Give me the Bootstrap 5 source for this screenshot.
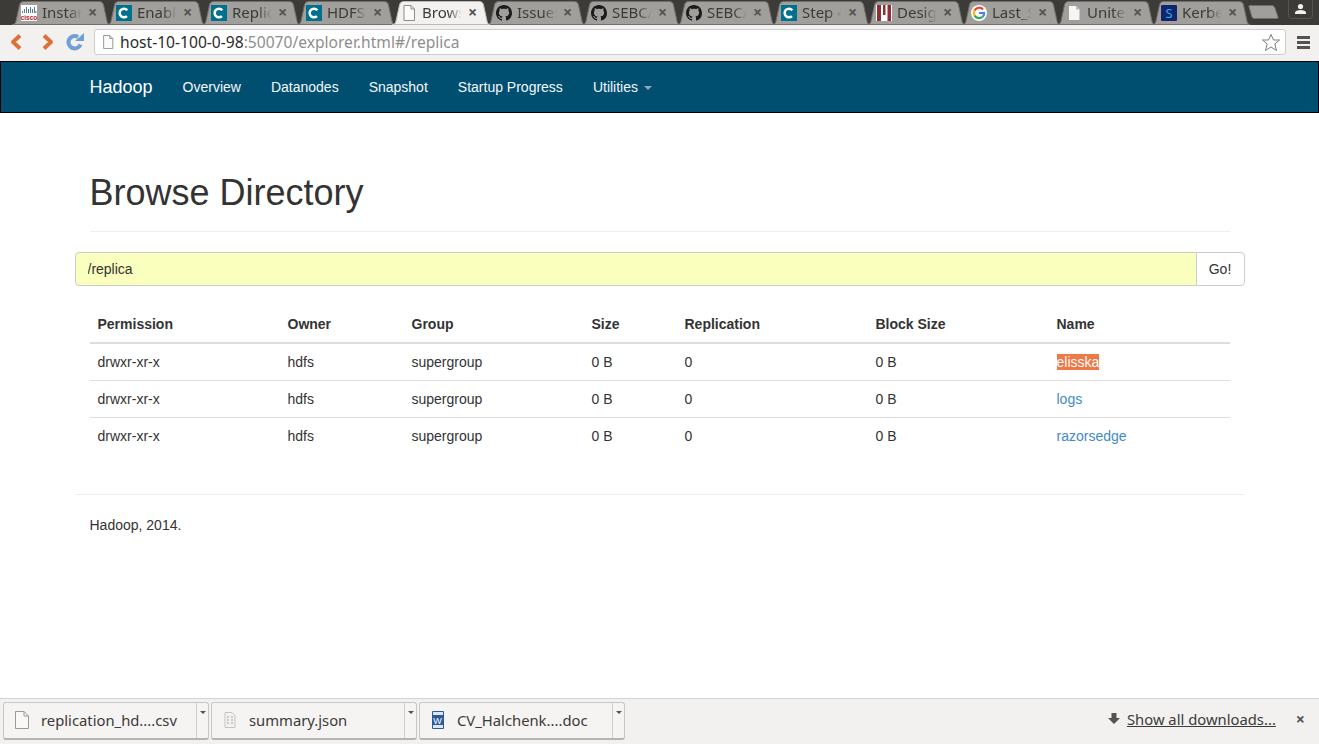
<!DOCTYPE html>
<html lang="en">
<head>
    <meta charset="UTF-8">
    <title>Browsing HDFS</title>
    <link href="https://cdn.jsdelivr.net/npm/bootstrap@5.3.0/dist/css/bootstrap.min.css" rel="stylesheet">
    <style>
        html, body { height: 100%; }
        body {
            font-family: "Liberation Sans", Arial, sans-serif;
            font-size: 14px;
            line-height: 20px;
            color: #333;
            overflow: hidden;
        }
        /* browser chrome */
        .tab-strip {
            height: 25px;
            background: #3c3b37;
            padding-left: 12px;
            font-family: "Noto Sans", sans-serif;
        }
        .tab-item {
            width: 98px;
            height: 24px;
            margin-right: -3px;
            margin-top: 1px;
            position: relative;
            flex: none;
            color: #3c3b37;
        }
        .tab-shape { position: absolute; left: 0; top: 0; width: 98px; height: 24px; fill: #a09f9c; stroke: #6f6e6a; }
        .tab-on { z-index: 2; }
        .tab-on .tab-shape { fill: #f2f1f0; stroke: #bbb; }
        .tab-fav { position: absolute; left: 9px; top: 4px; width: 16px; height: 16px; }
        .tab-title {
            position: absolute; left: 30px; top: 0; width: 40px;
            font-size: 15px; line-height: 22px; white-space: nowrap; overflow: hidden;
            -webkit-mask-image: linear-gradient(to right, #000 65%, transparent);
            mask-image: linear-gradient(to right, #000 65%, transparent);
        }
        .tab-x { position: absolute; left: 75px; top: 0; width: 11px; font-size: 16px; font-weight: 700; line-height: 22px; text-align: center; color: #55534f; }
        .new-tab { width: 32px; height: 14px; margin: 5px 0 0 1px; flex: none; fill: #a09f9c; stroke: #6f6e6a; }
        .profile-btn {
            width: 25px; height: 19px; flex: none; margin-left: auto; margin-right: 6px;
            border: 1px solid #55534f; border-top: 0; border-radius: 0 0 4px 4px;
            background: #3c3b37;
        }
        .tool-bar {
            height: 36px;
            background: #f2f1f0;
            padding-left: 8px;
            padding-bottom: 2px;
            font-family: "Noto Sans", sans-serif;
        }
        .tool-ico { width: 16px; height: 18px; flex: none; }
        .reload-ico { width: 18px; margin-left: 10px; }
        .url-box {
            width: 1192px; height: 26px; margin-left: 10px; flex: none;
            background: #fff; border: 1px solid #ccc; border-radius: 3px;
            padding-left: 6px;
            font-size: 15.6px; white-space: nowrap;
        }
        .url-host { color: #2b2b2b; margin-left: 5px; }
        .url-rest { color: #8e8e8e; }
        .menu-bars { width: 13px; margin-left: 11px; flex: none; }
        .menu-bars i { display: block; height: 3px; background: #55534f; margin: 2px 0; }

        /* hadoop page */
        .hadoop-nav {
            height: 52px;
            background: #004f70;
            border: 1px solid #000;
            padding: 0;
        }
        .page-wrap { width: 1170px; margin: 0 auto; padding: 0 15px; }
        .hadoop-nav .navbar-brand { font-size: 18px; line-height: 20px; color: #fff; padding: 15px; margin: 0 0 0 -15px; }
        .hadoop-nav.navbar-expand .navbar-nav .nav-link { color: #f4f7f9; padding: 15px; line-height: 20px; }
        .hadoop-nav .dropdown-toggle::after { color: #8fa9b8; margin-left: 6px; vertical-align: 2px; border-top-width: 4px; border-left-width: 4px; border-right-width: 4px; }
        .head-block { margin-top: 60px; padding-bottom: 8px; border-bottom: 1px solid #eee; margin-bottom: 20px; }
        .head-block h1 { font-size: 36px; line-height: 40px; font-weight: 500; margin: 0 0 10px; color: #333; }
        .path-group { margin: 0 -15px; width: 1170px; }
        .path-group .form-control {
            height: 34px; font-size: 14px; line-height: 20px; padding: 6px 12px;
            background: #faffbd; color: #333; border-color: #ccc; border-radius: 4px 0 0 4px;
        }
        .path-group .btn { width: 49px; height: 34px; padding: 6px 0; font-size: 14px; line-height: 20px; background: #fff; border-color: #ccc; color: #333; border-radius: 0 4px 4px 0; }
        .dir-table { width: 1140px; margin: 19px 0 40px; table-layout: fixed; color: #333; }
        .dir-table th, .dir-table td { padding: 8px; line-height: 20px; border-bottom: 1px solid #ddd; border-top: 0; font-size: 14px; }
        .dir-table thead th { border-bottom: 2px solid #ddd; height: 38px; }
        .dir-table tbody tr:last-child td { border-bottom: 0; }
        .dir-table a { color: #428bca; text-decoration: none; }
        .dir-table .w-a { width: 190px; }
        .dir-table .w-b { width: 124px; }
        .dir-table .w-c { width: 180px; }
        .dir-table .w-d { width: 93px; }
        .dir-table .w-e { width: 191px; }
        .dir-table .w-f { width: 181px; }
        .dir-table .w-g { width: 181px; }
        .picked { background: #f07746; color: #fff; display: inline-block; line-height: 16px; }
        .foot-rule { margin: 0 -15px 20px; border: 0; border-top: 1px solid #eee; opacity: 1; width: 1170px; }

        /* download shelf */
        .shelf {
            margin-top: auto;
            height: 46px;
            background: #f2f1f0;
            border-top: 1px solid #d4d3d1;
            padding: 3px 0 0 3px;
            font-family: "Noto Sans", sans-serif;
            font-size: 14.8px;
            color: #3c3b37;
        }
        .dl-item {
            width: 206px; height: 38px; margin-right: 2px; flex: none;
            background: #f5f4f3; border: 1px solid #c8c7c5; border-bottom: 2px solid #b5b4b2; border-radius: 3px;
        }
        .dl-main { width: 192px; padding: 0 0 2px 10px; gap: 11px; }
        .dl-main svg { width: 16px; height: 20px; flex: none; }
        .dl-drop { width: 12px; border-left: 1px solid #d0cfcd; padding-top: 8px; }
        .dl-drop i { display: block; margin: 0 auto; width: 0; height: 0; border-left: 3px solid transparent; border-right: 3px solid transparent; border-top: 3px solid #55534f; }
        .show-all { color: #3c3b37; text-decoration: underline; }
        .shelf-arrow { margin-right: 7px; }
        .shelf-x { margin: 0 14px 0 20px; color: #55534f; font-size: 16px; font-weight: 700; }
        .shelf-tools { margin-left: auto; height: 34px; }
    </style>
</head>
<body class="d-flex flex-column">
    <svg width="0" height="0" class="position-absolute">
        <symbol id="tabshape" viewBox="0 0 98 24"><path d="M0 23.5C3 23.500 3.500 22 4 20L7.500 4C8 1.500 9.500 .5 12 .5H87C89.500 .5 91 1.500 91.500 4L95 20C95.500 22 96 23.500 98 23.500Z"/></symbol>
        <symbol id="conf" viewBox="0 0 16 16"><rect width="16" height="16" fill="#00708f"/><circle cx="8" cy="8" r="4.3" fill="none" stroke="#fff" stroke-width="2.6" stroke-dasharray="20 7" stroke-dashoffset="-3.4"/></symbol>
        <symbol id="gh" viewBox="0 0 16 16"><path fill="#1b1b1b" d="M8 0C3.58 0 0 3.58 0 8c0 3.54 2.29 6.53 5.47 7.59.4.07.55-.17.55-.38 0-.19-.01-.82-.01-1.49-2.01.37-2.53-.49-2.69-.94-.09-.23-.48-.94-.82-1.13-.28-.15-.68-.52-.01-.53.63-.01 1.08.58 1.23.82.72 1.21 1.87.87 2.33.66.07-.52.28-.87.51-1.07-1.78-.2-3.64-.89-3.64-3.95 0-.87.31-1.59.82-2.15-.08-.2-.36-1.02.08-2.12 0 0 .67-.21 2.2.82.64-.18 1.32-.27 2-.27s1.36.09 2 .27c1.53-1.04 2.2-.82 2.2-.82.44 1.1.16 1.92.08 2.12.51.56.82 1.27.82 2.15 0 3.07-1.87 3.75-3.65 3.95.29.25.54.73.54 1.48 0 1.07-.01 1.93-.01 2.2 0 .21.15.46.55.38A8.01 8.01 0 0 0 16 8c0-4.42-3.58-8-8-8z"/></symbol>
        <symbol id="page" viewBox="0 0 16 16"><path fill="#fbfbfb" stroke="#8c8c8c" d="M3 .5H10L13.5 4V15.5H3Z"/><path fill="none" stroke="#8c8c8c" d="M10 .5V4H13.5"/></symbol>
    </svg>

    <div class="tab-strip d-flex flex-shrink-0">
        <div class="tab-item">
            <svg class="tab-shape"><use href="#tabshape"/></svg>
            <svg class="tab-fav" viewBox="0 0 16 16">
                <rect width="16" height="16" fill="#fff"/>
                <path stroke="#3f6f8f" stroke-width=".9" d="M1.500 6V8M3.500 4V8M5.500 2V8M7.500 4V8M9.500 2V8M11.500 4V8M13.500 2V8M14.800 6V8"/>
                <text x="8" y="14.500" text-anchor="middle" font-size="6.500" font-weight="700" fill="#b01c2e" font-family="Liberation Sans">cisco</text>
            </svg>
            <span class="tab-title">Instar</span><span class="tab-x">×</span>
        </div>
        <div class="tab-item"><svg class="tab-shape"><use href="#tabshape"/></svg><svg class="tab-fav"><use href="#conf"/></svg><span class="tab-title">Enabl</span><span class="tab-x">×</span></div>
        <div class="tab-item"><svg class="tab-shape"><use href="#tabshape"/></svg><svg class="tab-fav"><use href="#conf"/></svg><span class="tab-title">Replic</span><span class="tab-x">×</span></div>
        <div class="tab-item"><svg class="tab-shape"><use href="#tabshape"/></svg><svg class="tab-fav"><use href="#conf"/></svg><span class="tab-title">HDFS</span><span class="tab-x">×</span></div>
        <div class="tab-item tab-on"><svg class="tab-shape"><use href="#tabshape"/></svg><svg class="tab-fav"><use href="#page"/></svg><span class="tab-title">Brows</span><span class="tab-x">×</span></div>
        <div class="tab-item"><svg class="tab-shape"><use href="#tabshape"/></svg><svg class="tab-fav"><use href="#gh"/></svg><span class="tab-title">Issues</span><span class="tab-x">×</span></div>
        <div class="tab-item"><svg class="tab-shape"><use href="#tabshape"/></svg><svg class="tab-fav"><use href="#gh"/></svg><span class="tab-title">SEBC/</span><span class="tab-x">×</span></div>
        <div class="tab-item"><svg class="tab-shape"><use href="#tabshape"/></svg><svg class="tab-fav"><use href="#gh"/></svg><span class="tab-title">SEBC/</span><span class="tab-x">×</span></div>
        <div class="tab-item"><svg class="tab-shape"><use href="#tabshape"/></svg><svg class="tab-fav"><use href="#conf"/></svg><span class="tab-title">Step 4</span><span class="tab-x">×</span></div>
        <div class="tab-item">
            <svg class="tab-shape"><use href="#tabshape"/></svg>
            <svg class="tab-fav" viewBox="0 0 16 16"><rect width="16" height="16" fill="#fff"/><path fill="#8f2f33" d="M1 0H5V16H1ZM7 0H9.500V10H7ZM11.500 0H15V16H11.500Z"/></svg>
            <span class="tab-title">Desig</span><span class="tab-x">×</span>
        </div>
        <div class="tab-item">
            <svg class="tab-shape"><use href="#tabshape"/></svg>
            <svg class="tab-fav" viewBox="0 0 16 16">
                <circle cx="8" cy="8" r="8" fill="#fff"/>
                <g fill="none" stroke-width="2.200">
                    <path stroke="#ea4335" d="M12 4.400A5.200 5.200 0 0 0 3.600 5.400"/>
                    <path stroke="#fbbc05" d="M3.600 5.400A5.200 5.200 0 0 0 3.600 10.600"/>
                    <path stroke="#34a853" d="M3.600 10.600A5.200 5.200 0 0 0 11.600 11.800"/>
                    <path stroke="#4285f4" d="M11.600 11.800A5.200 5.200 0 0 0 13.200 8H8"/>
                </g>
            </svg>
            <span class="tab-title">Last_S</span><span class="tab-x">×</span>
        </div>
        <div class="tab-item">
            <svg class="tab-shape"><use href="#tabshape"/></svg>
            <svg class="tab-fav" viewBox="0 0 16 16"><path fill="#f5f5f5" d="M3 1H10L13.500 4.500V15H3Z"/><path fill="#bbb" d="M10 1V4.500H13.500Z"/></svg>
            <span class="tab-title">United</span><span class="tab-x">×</span>
        </div>
        <div class="tab-item">
            <svg class="tab-shape"><use href="#tabshape"/></svg>
            <svg class="tab-fav" viewBox="0 0 16 16"><rect width="16" height="16" rx="1" fill="#13246e"/><text x="8" y="13" text-anchor="middle" font-size="13" fill="#1fb6e8" font-family="Noto Sans">S</text></svg>
            <span class="tab-title">Kerbe</span><span class="tab-x">×</span>
        </div>
        <svg class="new-tab" viewBox="0 0 32 14"><path d="M2 .5H23C25 .5 26 1 27 3L30 12C30.500 13 30 13.500 29 13.500H7C5 13.500 4.500 13 4 12L1 2C.8 1 1 .5 2 .5Z"/></svg>
        <div class="profile-btn d-flex align-items-center justify-content-center">
            <svg width="13" height="12" viewBox="0 0 13 12"><circle cx="6.500" cy="3.500" r="2.600" fill="#f2f1f0"/><path fill="#f2f1f0" d="M1 11V9.500C1 8 3.500 7 6.500 7S12 8 12 9.500V11Z"/></svg>
        </div>
    </div>

    <div class="tool-bar d-flex align-items-center flex-shrink-0">
        <svg class="tool-ico" viewBox="0 0 16 18"><path fill="none" stroke="#e0703a" stroke-width="4" stroke-linejoin="round" d="M12 2.500L5 9L12 15.500"/></svg>
        <svg class="tool-ico ms-3" viewBox="0 0 16 18"><path fill="none" stroke="#e0703a" stroke-width="4" stroke-linejoin="round" d="M4 2.500L11 9L4 15.500"/></svg>
        <svg class="tool-ico reload-ico" viewBox="0 0 18 18"><path fill="none" stroke="#6f9fd4" stroke-width="4" d="M14.500 11.500A6.200 6.200 0 1 1 12 4"/><path fill="#6f9fd4" d="M9 8H18V0Z"/></svg>
        <div class="url-box d-flex align-items-center">
            <svg width="14" height="16" viewBox="0 0 16 16" class="flex-shrink-0"><use href="#page"/></svg>
            <span class="url-host">host-10-100-0-98</span><span class="url-rest">:50070/explorer.html#/replica</span>
            <svg class="ms-auto me-1" width="20" height="19" viewBox="0 0 20 19"><path fill="#fff" stroke="#7d7d7d" d="M10 1.500L12.500 7H18.500L13.800 11L15.500 17.500L10 14L4.500 17.500L6.200 11L1.500 7H7.500Z"/></svg>
        </div>
        <div class="menu-bars"><i></i><i></i><i></i></div>
    </div>

    <nav class="navbar navbar-expand hadoop-nav flex-shrink-0">
        <div class="page-wrap d-flex">
            <a class="navbar-brand" href="#">Hadoop</a>
            <ul class="navbar-nav">
                <li class="nav-item"><a class="nav-link" href="#">Overview</a></li>
                <li class="nav-item"><a class="nav-link" href="#">Datanodes</a></li>
                <li class="nav-item"><a class="nav-link" href="#">Snapshot</a></li>
                <li class="nav-item"><a class="nav-link" href="#">Startup Progress</a></li>
                <li class="nav-item dropdown"><a class="nav-link dropdown-toggle" href="#">Utilities</a></li>
            </ul>
        </div>
    </nav>

    <div class="page-wrap">
        <div class="head-block"><h1>Browse Directory</h1></div>
        <div class="input-group path-group">
            <input class="form-control" type="text" value="/replica">
            <button class="btn" type="button">Go!</button>
        </div>
        <table class="table dir-table">
            <thead>
                <tr>
                    <th class="w-a">Permission</th><th class="w-b">Owner</th><th class="w-c">Group</th><th class="w-d">Size</th><th class="w-e">Replication</th><th class="w-f">Block Size</th><th class="w-g">Name</th>
                </tr>
            </thead>
            <tbody>
                <tr><td>drwxr-xr-x</td><td>hdfs</td><td>supergroup</td><td>0 B</td><td>0</td><td>0 B</td><td><span class="picked">elisska</span></td></tr>
                <tr><td>drwxr-xr-x</td><td>hdfs</td><td>supergroup</td><td>0 B</td><td>0</td><td>0 B</td><td><a href="#">logs</a></td></tr>
                <tr><td>drwxr-xr-x</td><td>hdfs</td><td>supergroup</td><td>0 B</td><td>0</td><td>0 B</td><td><a href="#">razorsedge</a></td></tr>
            </tbody>
        </table>
        <hr class="foot-rule">
        <p class="m-0">Hadoop, 2014.</p>
    </div>

    <div class="shelf d-flex flex-shrink-0">
        <div class="dl-item d-flex">
            <div class="dl-main d-flex align-items-center">
                <svg viewBox="0 0 16 20"><path fill="#f8f8f8" stroke="#9a9a9a" d="M1.500 1.500H10L14.500 6V18.500H1.500Z"/><path fill="none" stroke="#9a9a9a" d="M10 1.500V6H14.500"/></svg>
                <span>replication_hd....csv</span>
            </div>
            <div class="dl-drop"><i></i></div>
        </div>
        <div class="dl-item d-flex">
            <div class="dl-main d-flex align-items-center">
                <svg viewBox="0 0 16 20"><path fill="#f1f1f1" stroke="#c4c4c4" d="M3 2.500H10L13 5.500V17.500H3Z"/><path stroke="#a9a9a9" d="M5 7H7M9 7H11M5 10H7M9 10H11M5 13H7M9 13H11"/></svg>
                <span>summary.json</span>
            </div>
            <div class="dl-drop"><i></i></div>
        </div>
        <div class="dl-item d-flex">
            <div class="dl-main d-flex align-items-center">
                <svg viewBox="0 0 16 20"><path fill="#dfe6f1" stroke="#2c5a96" d="M2.500 1.500H13.500V18.500H2.500Z"/><rect x="2" y="5" width="11" height="10" fill="#2c5a96"/><text x="7.500" y="13.500" font-size="9" font-family="Liberation Sans" text-anchor="middle" fill="#fff">W</text></svg>
                <span>CV_Halchenk....doc</span>
            </div>
            <div class="dl-drop"><i></i></div>
        </div>
        <div class="shelf-tools d-flex align-items-center">
            <svg width="12" height="12" viewBox="0 0 12 12" class="shelf-arrow"><path fill="#55534f" d="M3.500 0H8.500V5H12L6 11L0 5H3.500Z"/></svg>
            <a class="show-all" href="#">Show all downloads...</a>
            <span class="shelf-x">×</span>
        </div>
    </div>
    <script src="https://cdn.jsdelivr.net/npm/bootstrap@5.3.0/dist/js/bootstrap.bundle.min.js"></script>
</body>
</html>
